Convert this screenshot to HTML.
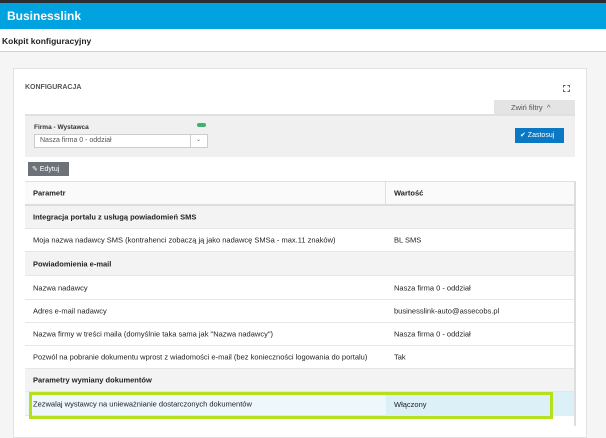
<!DOCTYPE html>
<html><head><meta charset="utf-8"><style>
*{margin:0;padding:0;box-sizing:border-box}
body{width:606px;height:426px;overflow:hidden;background:#f5f5f5;font-family:"Liberation Sans",sans-serif;position:relative;color:#222}
.a{position:absolute}
.row{position:absolute;left:25px;width:549px;border-bottom:1px solid #e6e6e6;font-size:7.5px;background:#fff}
.row span{position:absolute;top:50%;transform:translateY(-50%)}
.g{background:#f3f3f3;font-weight:bold}
</style></head><body>
<div class="a" style="left:0;top:0;width:606px;height:3px;background:#2a2e33"></div>
<div class="a" style="left:0;top:3px;width:606px;height:26px;background:#00a3e0"></div>
<div class="a" style="left:7px;top:9px;color:#fff;font-weight:bold;font-size:12px">Businesslink</div>
<div class="a" style="left:0;top:29px;width:606px;height:23px;background:#fff;border-bottom:1px solid #d0d0d0"></div>
<div class="a" style="left:2px;top:36px;font-weight:bold;font-size:8.5px">Kokpit konfiguracyjny</div>
<div class="a" style="left:13px;top:68px;width:574px;height:370px;background:#fff;border:1px solid #e2e2e2"></div>
<div class="a" style="left:25px;top:84px;font-weight:bold;font-size:7px;color:#555">KONFIGURACJA</div>
<svg class="a" style="left:563px;top:85px" width="7" height="7" viewBox="0 0 7 7" fill="none" stroke="#0a7fc0" stroke-width="1"><path d="M.5 2.5V.5h2M4.5.5h2v2M6.5 4.5v2h-2M2.5 6.5h-2v-2"/></svg>
<div class="a" style="left:494px;top:100px;width:81px;height:14px;background:#e4e4e4;font-size:7.5px;color:#555;padding:3px 0 0 17px">Zwiń filtry &nbsp;^</div>
<div class="a" style="left:25px;top:114px;width:550px;height:43px;background:#f0f0f0;border-top:2px solid #e0e0e0"></div>
<div class="a" style="left:34px;top:124px;font-size:6.5px;font-weight:bold;color:#333">Firma - Wystawca</div>
<div class="a" style="left:197px;top:123px;width:9px;height:4px;border-radius:2px;background:#3cb371"></div>
<div class="a" style="left:34px;top:134px;width:174px;height:14px;background:#fff;border:1px solid #ccc;font-size:7px;color:#555;padding:2px 5px">Nasza firma 0 - oddział</div>
<div class="a" style="left:190px;top:134px;width:1px;height:14px;background:#ccc"></div>
<div class="a" style="left:196px;top:136px;font-size:6px;color:#666">⌄</div>
<div class="a" style="left:515px;top:128px;width:49px;height:15px;background:#0a78c2;color:#fff;font-size:7px;padding:3px 0 0 5px">✔ Zastosuj</div>
<div class="a" style="left:28px;top:162px;width:41px;height:14px;background:#6c7278;color:#fff;font-size:7px;padding:3px 0 0 4px">✎ Edytuj</div>
<div class="a" style="left:25px;top:181px;width:551px;height:245px;border-right:2px solid #ddd;border-top:1px solid #e0e0e0"></div>
<div class="row g" style="top:182px;height:24px;background:#fafafa;border-bottom:2px solid #ddd"><span style="left:8px">Parametr</span><span style="left:369px">Wartość</span></div>
<div class="a" style="left:385px;top:182px;width:1px;height:24px;background:#e0e0e0"></div>
<div class="row g" style="top:206px;height:23px"><span style="left:8px">Integracja portalu z usługą powiadomień SMS</span></div>
<div class="row" style="top:229px;height:23px"><span style="left:8px">Moja nazwa nadawcy SMS (kontrahenci zobaczą ją jako nadawcę SMSa - max.11 znaków)</span><span style="left:369px">BL SMS</span></div>
<div class="row g" style="top:252px;height:24px"><span style="left:8px">Powiadomienia e-mail</span></div>
<div class="row" style="top:276px;height:24px"><span style="left:8px">Nazwa nadawcy</span><span style="left:369px">Nasza firma 0 - oddział</span></div>
<div class="row" style="top:300px;height:23px"><span style="left:8px">Adres e-mail nadawcy</span><span style="left:369px">businesslink-auto@assecobs.pl</span></div>
<div class="row" style="top:323px;height:23px"><span style="left:8px">Nazwa firmy w treści maila (domyślnie taka sama jak "Nazwa nadawcy")</span><span style="left:369px">Nasza firma 0 - oddział</span></div>
<div class="row" style="top:346px;height:23px"><span style="left:8px">Pozwól na pobranie dokumentu wprost z wiadomości e-mail (bez konieczności logowania do portalu)</span><span style="left:369px">Tak</span></div>
<div class="row g" style="top:369px;height:23px"><span style="left:8px">Parametry wymiany dokumentów</span></div>
<div class="row" style="top:392px;height:24px;background:#eef7fb"><span style="left:8px">Zezwalaj wystawcy na unieważnianie dostarczonych dokumentów</span></div>
<div class="a" style="left:386px;top:392px;width:188px;height:24px;background:#dcf0f8"></div>
<div class="a" style="left:394px;top:400px;font-size:7.5px">Włączony</div>
<div class="a" style="left:29px;top:392px;width:524px;height:27px;border:3px solid #b5e01e"></div>
</body></html>
